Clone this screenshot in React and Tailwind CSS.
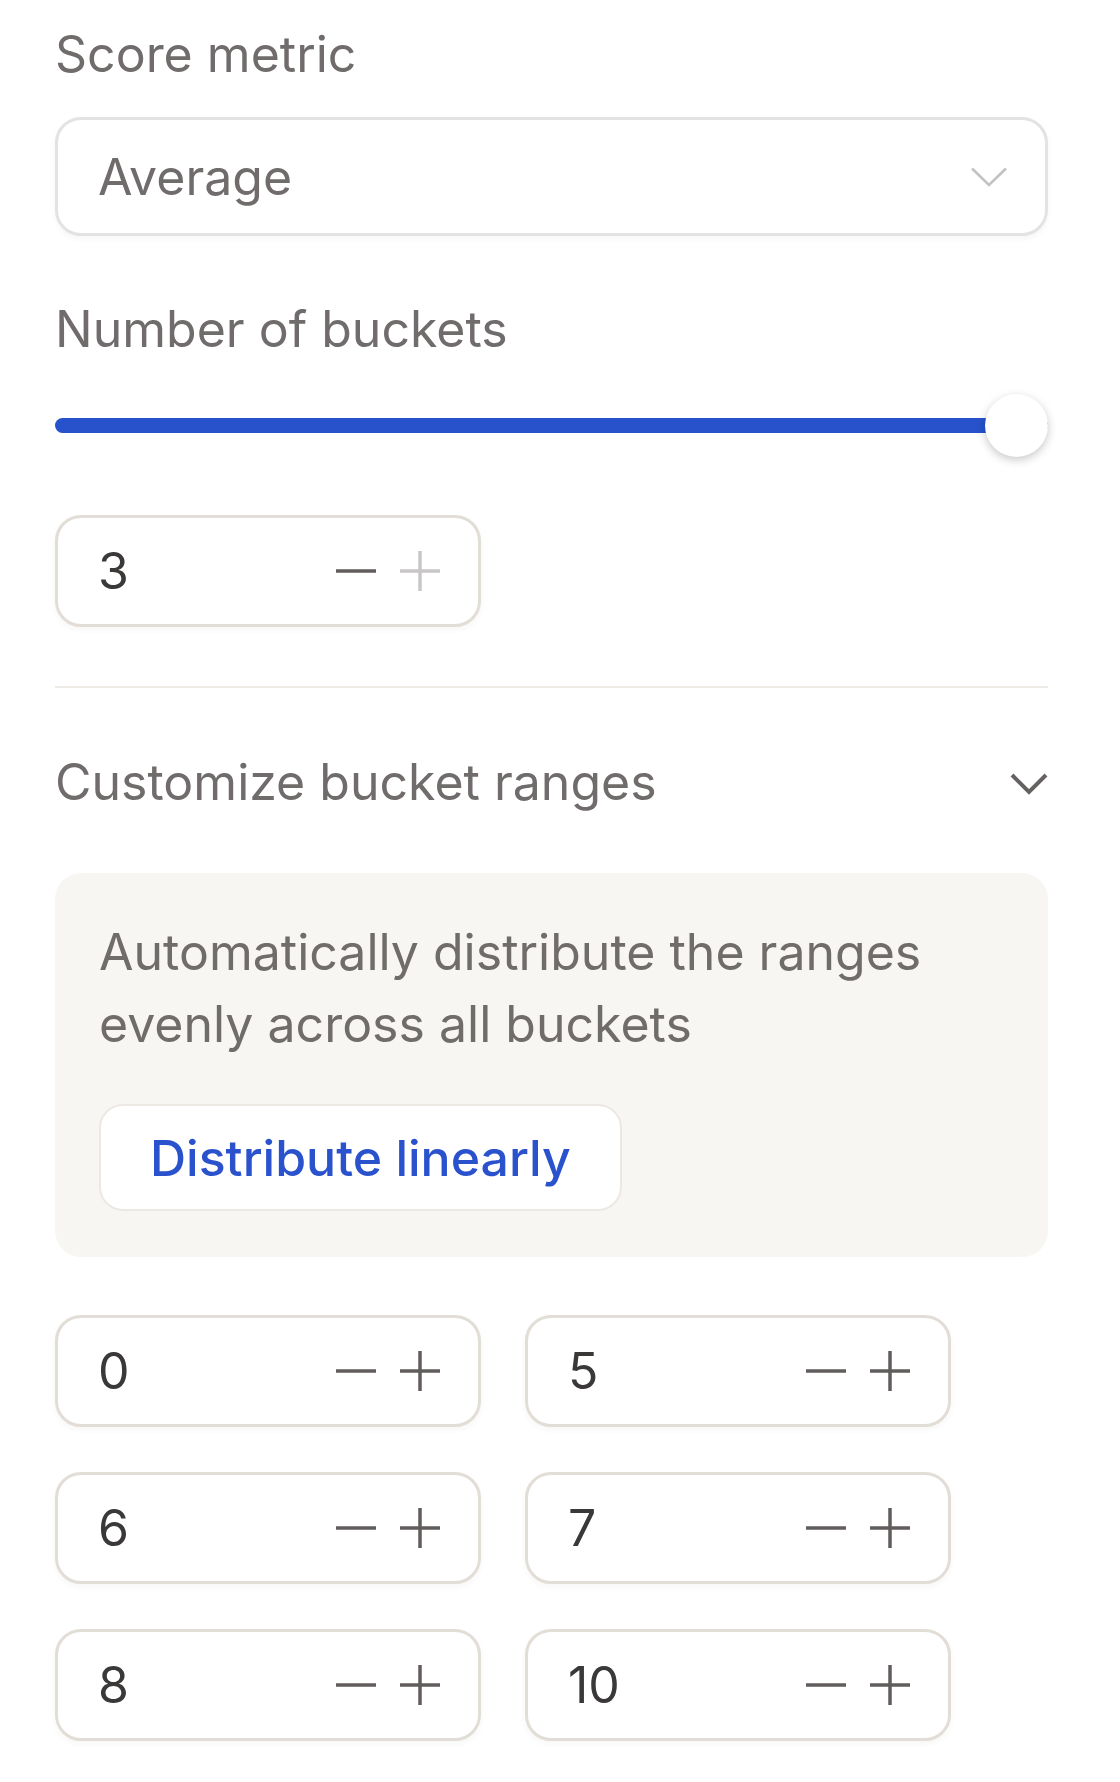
import React from "react";

const Minus = ({ className }) => (
  <svg width="40" height="40" viewBox="0 0 40 40" className={className}>
    <line x1="0" y1="20" x2="40" y2="20" stroke="currentColor" strokeWidth="3.5" />
  </svg>
);

const Plus = ({ className }) => (
  <svg width="40" height="40" viewBox="0 0 40 40" className={className}>
    <line x1="0" y1="20" x2="40" y2="20" stroke="currentColor" strokeWidth="3.5" />
    <line x1="20" y1="0" x2="20" y2="40" stroke="currentColor" strokeWidth="3.5" />
  </svg>
);

function Stepper({ value, plusDisabled }) {
  return (
    <div className="flex h-[112px] w-[426px] items-center justify-between rounded-[26px] border-[3px] border-[#e2ded7] bg-white pl-[40px] pr-[38px] shadow-[0_3px_6px_rgba(60,40,20,0.04)]">
      <span className="text-[50px] leading-[60px] text-[#3b3838]">{value}</span>
      <div className="flex items-center gap-[24px]">
        <Minus className="text-[#625d5d]" />
        <Plus className={plusDisabled ? "text-[#c8c6c6]" : "text-[#625d5d]"} />
      </div>
    </div>
  );
}

export default function App() {
  const buckets = [0, 5, 6, 7, 8, 10];

  return (
    <div className="min-h-[1782px] bg-white pb-[42px] pl-[55px] pr-[72px] pt-[24px] font-['Inter',sans-serif] text-[50px] leading-[60px] text-[#716c6c]">
      {/* Score metric */}
      <div>Score metric</div>
      <div className="mt-[33px] flex h-[119px] items-center justify-between rounded-[26px] border-[3px] border-[#e3e3e6] bg-white pl-[40px] pr-[38px] shadow-[0_3px_6px_rgba(0,0,0,0.04)]">
        <span>Average</span>
        <svg width="36" height="20" viewBox="0 0 36 20" className="text-[#c2c2c4]">
          <polyline points="1,1.5 18,18 35,1.5" fill="none" stroke="currentColor" strokeWidth="2.5" />
        </svg>
      </div>

      {/* Number of buckets */}
      <div className="mt-[63px]">Number of buckets</div>
      <div className="relative mt-[35px] flex h-[63px] items-center">
        <div className="h-[15px] w-full rounded-full bg-[#2752cc]" />
        <div className="absolute right-0 top-0 h-[63px] w-[63px] rounded-full bg-white shadow-[0_3px_10px_rgba(0,0,0,0.22)]" />
      </div>
      <div className="mt-[58px]">
        <Stepper value={3} plusDisabled />
      </div>

      <div className="mt-[59px] h-[2px] bg-[#efebe7]" />

      {/* Customize bucket ranges */}
      <div className="mt-[64px] flex items-center justify-between">
        <span>Customize bucket ranges</span>
        <svg width="38" height="22" viewBox="0 0 38 22" className="mt-[4px] text-[#676262]">
          <polyline points="2,2 19,19 36,2" fill="none" stroke="currentColor" strokeWidth="4" />
        </svg>
      </div>

      <div className="mt-[61px] rounded-[26px] bg-[#f7f6f3] px-[44px] pb-[46px] pt-[43px]">
        <p className="leading-[72px]">
          Automatically distribute the ranges
          <br />
          evenly across all buckets
        </p>
        <button className="mt-[44px] h-[107px] rounded-[24px] border-2 border-[#ece9e4] bg-white px-[49px] text-[50px] font-medium text-[#2a52cc]">
          Distribute linearly
        </button>
      </div>

      <div className="mt-[58px] grid grid-cols-[426px_426px] gap-x-[44px] gap-y-[45px]">
        {buckets.map((b) => (
          <Stepper key={b} value={b} />
        ))}
      </div>
    </div>
  );
}
